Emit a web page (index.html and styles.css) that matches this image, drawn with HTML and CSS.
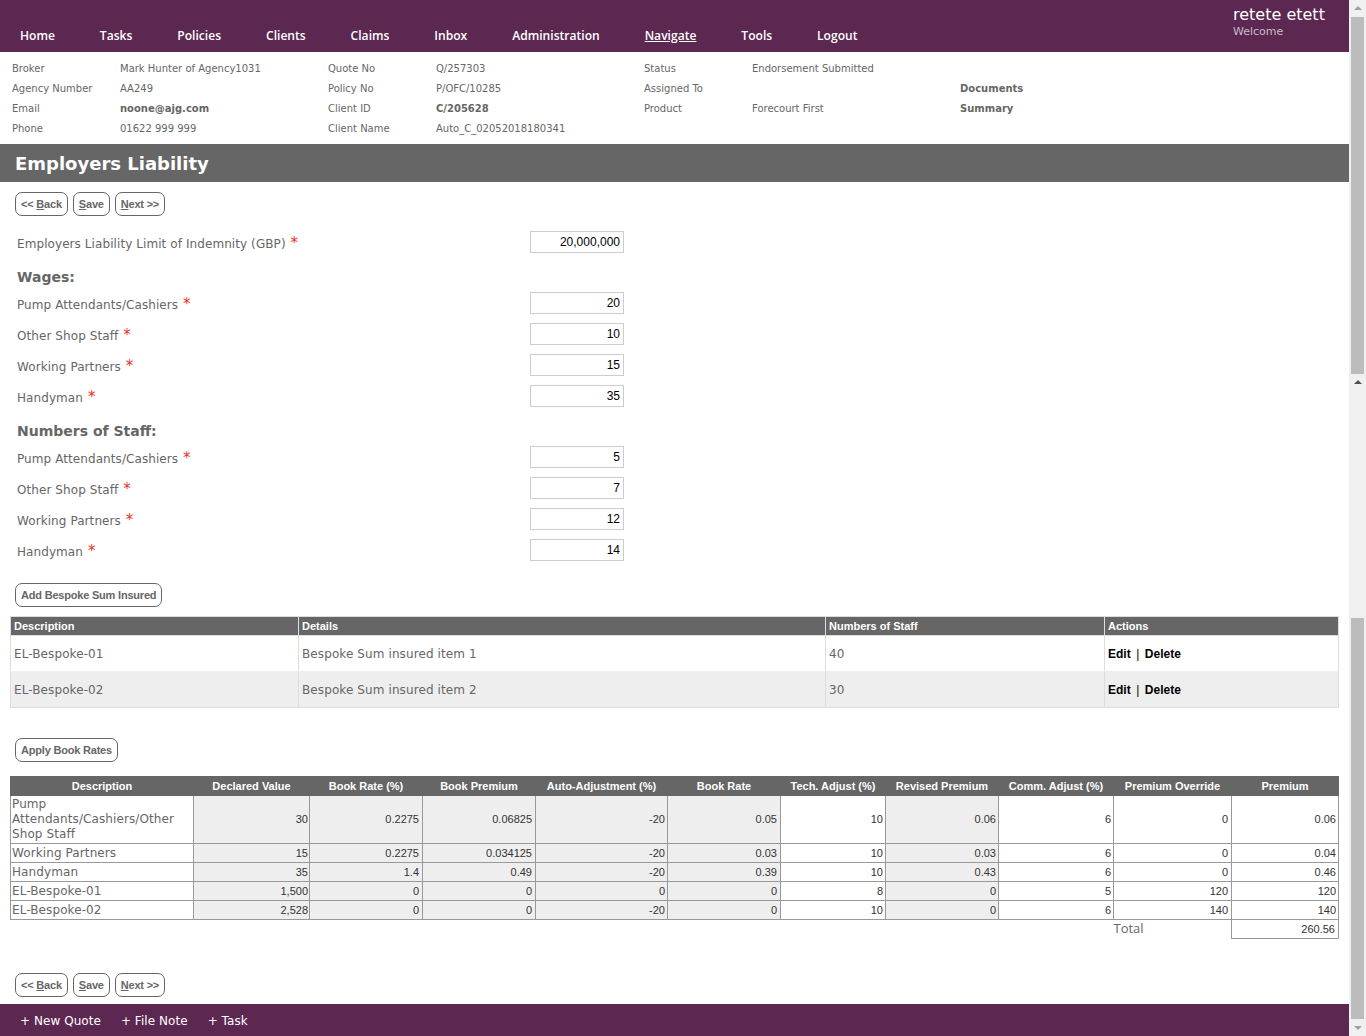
FILE: index.html
```html
<!DOCTYPE html>
<html lang="en">
<head>
    <meta charset="UTF-8">
    <title>Employers Liability</title>
    <link rel="stylesheet" href="styles.css">
</head>
<body>
<div class="page">
    <div class="main">
        <div class="topbar">
            <ul class="nav">
                <li>Home</li>
                <li>Tasks</li>
                <li>Policies</li>
                <li>Clients</li>
                <li>Claims</li>
                <li>Inbox</li>
                <li>Administration</li>
                <li class="active">Navigate</li>
                <li>Tools</li>
                <li>Logout</li>
            </ul>
            <div class="user">
                <div class="user-name">retete etett</div>
                <div class="user-welcome">Welcome</div>
            </div>
        </div>

        <div class="info">
            <span>Broker</span><span>Mark Hunter of Agency1031</span>
            <span>Quote No</span><span>Q/257303</span>
            <span>Status</span><span>Endorsement Submitted</span><span></span>

            <span>Agency Number</span><span>AA249</span>
            <span>Policy No</span><span>P/OFC/10285</span>
            <span>Assigned To</span><span></span><b>Documents</b>

            <span>Email</span><b>noone@ajg.com</b>
            <span>Client ID</span><b>C/205628</b>
            <span>Product</span><span>Forecourt First</span><b>Summary</b>

            <span>Phone</span><span>01622 999 999</span>
            <span>Client Name</span><span>Auto_C_02052018180341</span>
        </div>

        <h1 class="title">Employers Liability</h1>

        <div class="buttons">
            <button type="button">&lt;&lt; <u>B</u>ack</button>
            <button type="button"><u>S</u>ave</button>
            <button type="button"><u>N</u>ext &gt;&gt;</button>
        </div>

        <div class="form">
            <div class="row"><label>Employers Liability Limit of Indemnity (GBP) <i>*</i></label><input type="text" value="20,000,000"></div>
            <h2>Wages:</h2>
            <div class="row"><label>Pump Attendants/Cashiers <i>*</i></label><input type="text" value="20"></div>
            <div class="row"><label>Other Shop Staff <i>*</i></label><input type="text" value="10"></div>
            <div class="row"><label>Working Partners <i>*</i></label><input type="text" value="15"></div>
            <div class="row"><label>Handyman <i>*</i></label><input type="text" value="35"></div>
            <h2>Numbers of Staff:</h2>
            <div class="row"><label>Pump Attendants/Cashiers <i>*</i></label><input type="text" value="5"></div>
            <div class="row"><label>Other Shop Staff <i>*</i></label><input type="text" value="7"></div>
            <div class="row"><label>Working Partners <i>*</i></label><input type="text" value="12"></div>
            <div class="row"><label>Handyman <i>*</i></label><input type="text" value="14"></div>
        </div>

        <div class="buttons add-btn">
            <button type="button">Add Bespoke Sum Insured</button>
        </div>

        <table class="bespoke">
            <thead>
                <tr><th>Description</th><th>Details</th><th>Numbers of Staff</th><th>Actions</th></tr>
            </thead>
            <tbody>
                <tr>
                    <td>EL-Bespoke-01</td><td>Bespoke Sum insured item 1</td><td>40</td>
                    <td class="actions"><a>Edit</a><span>|</span><a>Delete</a></td>
                </tr>
                <tr class="alt">
                    <td>EL-Bespoke-02</td><td>Bespoke Sum insured item 2</td><td>30</td>
                    <td class="actions"><a>Edit</a><span>|</span><a>Delete</a></td>
                </tr>
            </tbody>
        </table>

        <div class="buttons rates-btn">
            <button type="button">Apply Book Rates</button>
        </div>

        <table class="rates">
            <thead>
                <tr>
                    <th>Description</th><th>Declared Value</th><th>Book Rate (%)</th><th>Book Premium</th>
                    <th>Auto-Adjustment (%)</th><th>Book Rate</th><th>Tech. Adjust (%)</th><th>Revised Premium</th>
                    <th>Comm. Adjust (%)</th><th>Premium Override</th><th>Premium</th>
                </tr>
            </thead>
            <tbody>
                <tr class="tall">
                    <td>Pump Attendants/Cashiers/Other Shop Staff</td><td>30</td><td>0.2275</td><td>0.06825</td>
                    <td>-20</td><td>0.05</td><td>10</td><td>0.06</td><td>6</td><td>0</td><td>0.06</td>
                </tr>
                <tr>
                    <td>Working Partners</td><td>15</td><td>0.2275</td><td>0.034125</td>
                    <td>-20</td><td>0.03</td><td>10</td><td>0.03</td><td>6</td><td>0</td><td>0.04</td>
                </tr>
                <tr>
                    <td>Handyman</td><td>35</td><td>1.4</td><td>0.49</td>
                    <td>-20</td><td>0.39</td><td>10</td><td>0.43</td><td>6</td><td>0</td><td>0.46</td>
                </tr>
                <tr>
                    <td>EL-Bespoke-01</td><td>1,500</td><td>0</td><td>0</td>
                    <td>0</td><td>0</td><td>8</td><td>0</td><td>5</td><td>120</td><td>120</td>
                </tr>
                <tr>
                    <td>EL-Bespoke-02</td><td>2,528</td><td>0</td><td>0</td>
                    <td>-20</td><td>0</td><td>10</td><td>0</td><td>6</td><td>140</td><td>140</td>
                </tr>
            </tbody>
            <tfoot>
                <tr>
                    <td colspan="9"></td><td class="total-label">Total</td><td class="total-value">260.56</td>
                </tr>
            </tfoot>
        </table>

        <div class="buttons bottom-btns">
            <button type="button">&lt;&lt; <u>B</u>ack</button>
            <button type="button"><u>S</u>ave</button>
            <button type="button"><u>N</u>ext &gt;&gt;</button>
        </div>

        <div class="footer">
            <span>+ New Quote</span>
            <span>+ File Note</span>
            <span>+ Task</span>
        </div>
    </div>

    <!-- scrollbar as captured in the screenshot -->
    <div class="scrollbar">
        <div class="arrow up"></div>
        <div class="thumb thumb-top"></div>
        <div class="arrow up"></div>
        <div class="track-gap"></div>
        <div class="thumb thumb-bottom"></div>
        <div class="arrow down"></div>
    </div>
</div>
</body>
</html>
```

FILE: styles.css
```css
html, body {
    margin: 0;
    padding: 0;
    height: 1036px;
    overflow: hidden;
}
body {
    font-family: "DejaVu Sans", Verdana, sans-serif;
    font-size: 12px;
    color: #666;
    background: white;
}
.page {
    display: flex;
    width: 1366px;
    height: 1036px;
}
.main {
    width: 1349px;
    flex: none;
}

/* top bar */
.topbar {
    height: 52px;
    background: #5c2751;
    display: flex;
    justify-content: space-between;
    box-sizing: border-box;
}
.nav {
    display: flex;
    gap: 44.88px;
    list-style: none;
    margin: 0;
    padding: 28px 0 0 20px;
    font-family: "Open Sans", Tahoma, sans-serif;
    font-size: 12.1px;
    font-weight: 600;
    line-height: 16px;
    color: white;
}
.nav .active {
    text-decoration: underline;
}
.user {
    width: 116px;
    padding-top: 5px;
}
.user-name {
    font-size: 16px;
    line-height: 20px;
    color: white;
}
.user-welcome {
    font-size: 11px;
    line-height: 13px;
    color: #c9bcc9;
}

/* policy details */
.info {
    height: 92px;
    box-sizing: border-box;
    padding: 7px 0 0 12px;
    display: grid;
    grid-template-columns: 108px 208px 108px 208px 108px 208px 200px;
    grid-auto-rows: 20px;
    font-size: 10px;
    line-height: 20px;
}
.info span, .info b {
    white-space: nowrap;
}

.title {
    margin: 0;
    height: 38px;
    box-sizing: border-box;
    padding: 1px 0 0 15px;
    background: #666;
    color: white;
    font-size: 18px;
    line-height: 38px;
    font-weight: bold;
}

/* buttons */
.buttons {
    display: flex;
    gap: 5px;
    padding: 10px 0 0 15px;
}
button {
    height: 24px;
    padding: 0 5px;
    background: white;
    border: 1px solid #666;
    border-radius: 7px;
    font-family: "Liberation Sans", Arial, sans-serif;
    font-size: 11px;
    font-weight: bold;
    letter-spacing: -0.2px;
    color: #666;
}
.add-btn {
    padding-top: 22px;
}
.rates-btn {
    padding-top: 30px;
}
.bottom-btns {
    padding-top: 34px;
}

/* form */
.form {
    padding: 15px 0 0 17px;
}
.row {
    display: flex;
    align-items: center;
    height: 22px;
    margin-bottom: 9px;
}
.row:last-child {
    margin-bottom: 0;
}
.row label {
    width: 513px;
    padding-top: 2px;
    font-size: 12px;
    letter-spacing: 0.08px;
}
.row label i {
    font-style: normal;
    font-size: 15px;
    color: #e8341c;
    margin-left: 1px;
}
.row input {
    width: 94px;
    height: 22px;
    box-sizing: border-box;
    padding: 0 3px;
    border: 1px solid #ccc;
    font-family: "Liberation Sans", Arial, sans-serif;
    font-size: 12px;
    color: black;
    text-align: right;
}
.form h2 {
    margin: 0;
    height: 30px;
    font-size: 14px;
    line-height: 30px;
    font-weight: bold;
}

/* tables */
table {
    border-collapse: collapse;
    table-layout: fixed;
    width: 1329px;
    margin: 0 0 0 10px;
}
.bespoke {
    margin-top: 9px;
}
.bespoke th {
    height: 18px;
    padding: 0 3px;
    background: #666;
    color: white;
    border: 1px solid #ddd;
    font-family: "Liberation Sans", Arial, sans-serif;
    font-size: 11px;
    text-align: left;
}
.bespoke td {
    height: 35px;
    padding: 0 3px;
    border-left: 1px solid #ddd;
    border-right: 1px solid #ddd;
    border-bottom: 1px solid #ddd;
    font-size: 12px;
    letter-spacing: 0.1px;
}
.bespoke tbody tr:first-child td {
    border-bottom-color: #eee;
}
.bespoke .alt td {
    background: #eee;
}
.bespoke th:nth-child(1) { width: 281px; }
.bespoke th:nth-child(2) { width: 520px; }
.bespoke th:nth-child(3) { width: 272px; }
.bespoke .actions {
    font-family: "Liberation Sans", Arial, sans-serif;
    font-weight: bold;
    letter-spacing: 0;
    color: black;
}
.actions span {
    font-weight: normal;
    margin: 0 5.5px;
}

.rates {
    margin-top: 14px;
}
.rates th {
    height: 18px;
    padding: 0;
    background: #666;
    color: white;
    border: 1px solid #666;
    font-family: "Liberation Sans", Arial, sans-serif;
    font-size: 11px;
    text-align: center;
    white-space: nowrap;
}
.rates th:nth-child(1) { width: 182px; }
.rates th:nth-child(2) { width: 115px; }
.rates th:nth-child(3) { width: 112px; }
.rates th:nth-child(4) { width: 112px; }
.rates th:nth-child(5) { width: 131px; }
.rates th:nth-child(6) { width: 112px; }
.rates th:nth-child(7) { width: 104px; }
.rates th:nth-child(8) { width: 112px; }
.rates th:nth-child(9) { width: 114px; }
.rates th:nth-child(10) { width: 117px; }
.rates tbody td {
    height: 18px;
    padding: 0 2px;
    border: 1px solid #999;
    font-family: "Liberation Sans", Arial, sans-serif;
    font-size: 11px;
    line-height: 15px;
    color: #333;
    text-align: right;
}
.rates tbody .tall td {
    height: 47px;
}
.rates tbody td:first-child {
    padding-left: 1px;
    font-family: "DejaVu Sans", Verdana, sans-serif;
    font-size: 12px;
    letter-spacing: 0.1px;
    color: #666;
    text-align: left;
}
.rates tbody td:nth-child(2) {
    padding-right: 1px;
}
.rates tbody td:nth-child(3),
.rates tbody td:nth-child(4),
.rates tbody td:nth-child(6),
.rates tbody td:nth-child(10) {
    padding-right: 3px;
}
.rates tbody td:nth-child(2),
.rates tbody td:nth-child(3),
.rates tbody td:nth-child(4),
.rates tbody td:nth-child(5),
.rates tbody td:nth-child(6),
.rates tbody td:nth-child(8) {
    background: #eee;
}
.rates tfoot td {
    height: 18px;
    padding: 0;
}
.rates .total-label {
    height: 16px;
    padding-bottom: 2px;
    font-family: "Open Sans", Tahoma, sans-serif;
    font-size: 13px;
    line-height: 14px;
    text-align: left;
}
.rates .total-value {
    border: 1px solid #999;
    padding-right: 3px;
    font-family: "Liberation Sans", Arial, sans-serif;
    font-size: 11px;
    color: #333;
    text-align: right;
}

/* bottom bar */
.footer {
    margin-top: 7px;
    height: 32px;
    box-sizing: border-box;
    background: #5c2751;
    display: flex;
    align-items: center;
    gap: 20px;
    padding: 2px 0 0 20px;
    font-size: 12px;
    letter-spacing: 0.05px;
    color: white;
}

/* scrollbar */
.scrollbar {
    width: 17px;
    flex: none;
    background: #f0f0f0;
    display: flex;
    flex-direction: column;
    align-items: center;
}
.arrow {
    flex: none;
    width: 0;
    height: 0;
    border-left: 4px solid transparent;
    border-right: 4px solid transparent;
}
.arrow.up {
    margin: 6px 0 7px;
    border-bottom: 4px solid #505050;
}
.arrow.down {
    margin: 7px 0 6px;
    border-top: 4px solid #a0a0a0;
}
.scrollbar .arrow:first-child {
    border-bottom-color: #a0a0a0;
}
.thumb {
    flex: none;
    width: 13px;
    background: #bcbcbc;
}
.thumb-top {
    height: 357px;
}
.track-gap {
    flex: none;
    height: 227px;
}
.thumb-bottom {
    height: 401px;
}
```
